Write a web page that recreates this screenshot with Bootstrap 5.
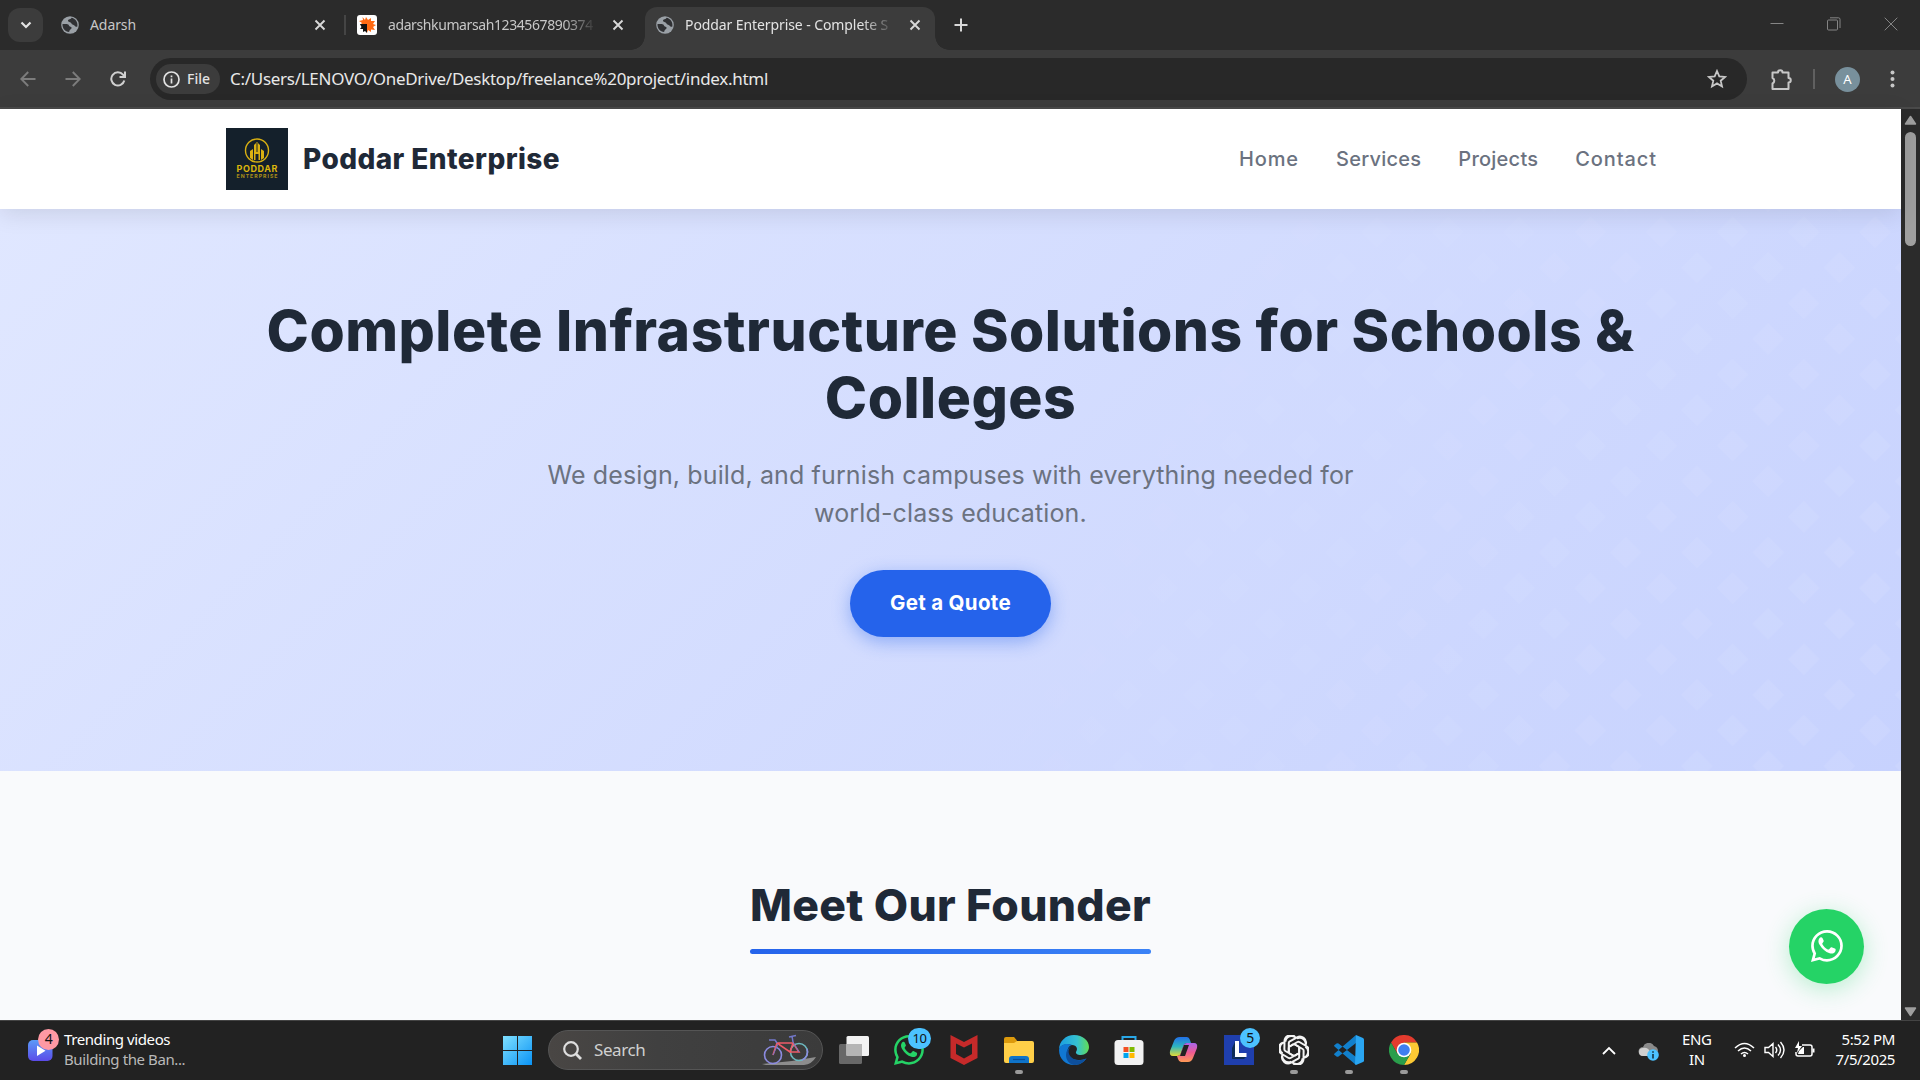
<!DOCTYPE html>
<html lang="en">
<head>
<meta charset="utf-8">
<title>Poddar Enterprise - Complete Solutions</title>
<link href="https://cdn.jsdelivr.net/npm/bootstrap@5.3.0/dist/css/bootstrap.min.css" rel="stylesheet">
<style>
html,body{height:100%;overflow:hidden}
body{font-family:"Noto Sans","Open Sans",sans-serif;background:#222;color:#e3e3e3;font-size:15px;line-height:20px}
svg{display:block;flex:none}
span,a{white-space:nowrap}
/* browser chrome */
.tabstrip{height:50px;background:#2b2b2b;padding-left:8px}
.tabmenu{width:35px;height:34px;border-radius:12px;background:#3c3c3c;margin-top:8px}
.btab{height:43px;margin-top:7px;font-size:14px;color:#c7c7c7}
.btab span{margin-left:11px;letter-spacing:-.09px}
.btab-1{width:301px;padding:0 18px 0 18px}
.btab-2{width:299px;padding:0 21px 0 11px}
.btab-2 span{width:209px;letter-spacing:-.4px}
.btab-sep{width:2px;height:20px;background:#454545}
.btab-on{width:290px;background:#3c3c3c;border-radius:12px 12px 0 0;padding:0 14px 0 11px;color:#e3e3e3}
.btab-on span{width:210px}
.btab-on::before,.btab-on::after{content:"";position:absolute;bottom:0;width:14px;height:14px}
.btab-on::before{left:-14px;background:radial-gradient(circle at 0 0,transparent 13.5px,#3c3c3c 14px)}
.btab-on::after{right:-14px;background:radial-gradient(circle at 100% 0,transparent 13.5px,#3c3c3c 14px)}
.fadeout{-webkit-mask-image:linear-gradient(90deg,#000 84%,transparent);mask-image:linear-gradient(90deg,#000 84%,transparent);overflow:hidden}
.newtab{margin:18px 0 0 19px}
.wincontrols{gap:43px;padding:17px 22px 0 0}
.toolbar{height:59px;background:#3c3c3c;border-bottom:2px solid #4a4a4a;padding:8px 0 0 16px}
.toolgroup{height:42px}
.navkeys{width:134px;gap:29px;padding-left:4px}
.omnibox{width:1597px;height:42px;border-radius:21px;background:#282828;padding:0 20px 0 6px}
.filechip{width:64px;height:30px;border-radius:15px;background:#3c3c3c;padding-left:7px;gap:7px;font-size:14px;font-weight:500}
.urltext{font-size:17px;color:#e8e8e8;margin-left:10px;letter-spacing:-.285px}
.exts{padding-left:24px}
.exts-sep{width:2px;height:20px;background:#606060;margin:0 20px 0 21px}
.avatar{width:25px;height:25px;border-radius:50%;background:#78909c;color:#fff;font-size:13px;margin-right:30px}
/* page */
.viewport{height:911px;background:#2b2b2b}
.sitepage{width:1901px;font-family:Inter,sans-serif;background:#f9fafc}
.sitehead{height:100px;background:#fff;padding:0 244px 0 226px;box-shadow:0 5px 22px rgba(0,0,0,.1);z-index:2}
.brandname{font-size:28px;font-weight:800;color:#1f2937;margin-left:15px;letter-spacing:.42px}
.sitenav{font-size:20px;font-weight:500;gap:37px}
.sitenav .nav-link{color:#6b7280;padding:0;letter-spacing:.25px}
.sitenav .wide{letter-spacing:.9px}
.hero{height:562px;background:linear-gradient(135deg,#e0e7ff,#c7d2fe);padding-top:88px}
.hero h1{font-size:57px;line-height:67px;font-weight:800;color:#1f2937;margin:0;letter-spacing:.48px}
.herosub{font-size:25px;line-height:38px;color:#6b7280;margin-top:25px;letter-spacing:.13px}
.quote{width:201px;height:67px;border-radius:34px;background:#2563eb;color:#fff;font-size:20.5px;font-weight:700;letter-spacing:.3px;margin-top:38px;box-shadow:0 5px 18px rgba(37,99,235,.4);border:0}
.founder{height:249px;padding-top:100px}
.founder h2{font-size:44.5px;line-height:68px;font-weight:800;color:#1f2937;margin:0;letter-spacing:.31px}
.rule{width:401px;height:5px;border-radius:3px;background:linear-gradient(90deg,#2563eb,#3b82f6);margin-top:10px}
.wa{right:37px;bottom:36px;width:75px;height:75px;border-radius:50%;background:#25d366;box-shadow:0 5px 25px rgba(37,211,102,.3);padding-bottom:2px;z-index:3}
.scroller{width:19px;padding:6px 0 3px}
.thumb{width:11px;height:114px;border-radius:6px;background:#9f9f9f;margin-top:7px}
/* taskbar */
.taskbar{height:60px;background:#222;border-top:1px solid #444;color:#fff;letter-spacing:-.4px;padding-bottom:1px}
.widget{width:503px;padding-left:28px}
.widget-icon{width:36px}
.widget-sub{color:#b9b9b9}
.twolines{margin-top:-2px}
.bubble{position:absolute;border-radius:50%;color:#111;text-align:center;background:#4cc2ff;font-size:14px}
.bubble-4{left:10px;top:-11px;width:21px;height:21px;background:#ff99a4}
.bubble-10{left:14px;top:-7px;width:23px;height:21px;border-radius:11px;font-size:13px}
.bubble-5{left:16px;top:-7px;width:20px;height:20px}
.searchbox{width:275px;height:40px;border-radius:20px;background:linear-gradient(90deg,#494644,#404040 40%,#3b3b3b);border:1px solid #555;margin:0 16px;padding:0 6px 0 14px;font-size:17px;color:#d0d0d0;gap:12px}
.apps{gap:25px}
.app{width:30px;height:30px}
.running::after{content:"";position:absolute;left:11px;bottom:-9px;width:8px;height:4px;border-radius:2px;background:#9a9a9a}
.tray{padding-right:25px}
.cloud{margin:3px 22px 0}
.status{gap:9px;padding:0 21px 0 22px}
</style>
</head>
<body class="d-flex flex-column">
<svg width="0" height="0" class="position-absolute"><defs>
<symbol id="globe" viewBox="0 0 18 18"><circle cx="9" cy="9" r="8.8" fill="#9aa0a6"/><path d="M1.500 8c3 .1 6-.3 6.400 1.400.4 1.500 2.600.9 2.700 2.400.1 1.400-2.200 1.600-2.400 4.200C4 15.800 1.300 12.500 1.500 8zM10.500 1.700c-.3 1.700-3.600 1.200-3.500 3.100.1 1.600 2.700.9 3.300 2.500.6 1.700 3 1.500 3.600 2.800.4.700 1.500.7 2.500.3C17 5.500 14 2.200 10.500 1.700z" fill="#303134"/></symbol>
<symbol id="cross" viewBox="0 0 12 12"><path d="M1.500 1.500l9 9m0-9l-9 9" stroke="#d8d8d8" stroke-width="1.900"/></symbol>
<symbol id="wapp" viewBox="0 0 16 16"><path d="M13.601 2.326A7.850 7.850 0 0 0 7.994 0C3.627 0 .068 3.558.064 7.926c0 1.399.366 2.760 1.057 3.965L0 16l4.204-1.102a7.900 7.900 0 0 0 3.790.965h.004c4.368 0 7.926-3.558 7.930-7.930A7.900 7.900 0 0 0 13.600 2.326zM7.994 14.521a6.600 6.600 0 0 1-3.356-.920l-.240-.144-2.494.654.666-2.433-.156-.251a6.560 6.560 0 0 1-1.007-3.505c0-3.626 2.957-6.584 6.591-6.584a6.560 6.560 0 0 1 4.660 1.931 6.560 6.560 0 0 1 1.928 4.660c-.004 3.639-2.961 6.592-6.592 6.592"/><path d="M5.800 4.100c-.3-.6-1.200-.6-1.600 0-.7.900-.6 2.200.1 3.300 1.300 2.100 2.900 3.600 5 4.200 1.300.4 2.500 0 2.900-1 .3-.8.1-1.100-.3-1.300l-1.300-.6c-.4-.2-.7-.1-.9.200l-.6.7c-.2.200-.4.200-.7.100-1.200-.6-2.100-1.500-2.700-2.600-.1-.2-.1-.4.100-.6l.5-.7c.1-.2.100-.3 0-.5z"/></symbol>
</defs></svg>

<div class="tabstrip d-flex align-items-start">
  <div class="tabmenu d-flex align-items-center justify-content-center"><svg width="12" height="8"><path d="M1.500 1.500L6 6l4.500-4.500" fill="none" stroke="#e3e3e3" stroke-width="2.200"/></svg></div>
  <div class="btab btab-1 d-flex align-items-center pb-2"><svg width="18" height="18"><use href="#globe"/></svg><span>Adarsh</span><svg class="ms-auto" width="12" height="12"><use href="#cross"/></svg></div>
  <div class="btab-sep align-self-center"></div>
  <div class="btab btab-2 d-flex align-items-center pb-2"><svg width="20" height="20" viewBox="0 0 20 20"><rect width="20" height="20" rx="3" fill="#fff"/><path d="M9 2l2 3 3-2v3l4 0-2 3 3 1-3 2 2 3-4-.5V17l-3-2-1 3-1.500-8H3l2-2-3-2 4-1-.5-3L8 5z" fill="#ff6a13"/><path d="M3 9h7v9l-2-2-2 1v-3l-3 0 1.500-2z" fill="#111"/></svg><span class="fadeout">adarshkumarsah1234567890374</span><svg class="ms-auto" width="12" height="12"><use href="#cross"/></svg></div>
  <div class="btab btab-on position-relative d-flex align-items-center pb-2"><svg width="18" height="18"><use href="#globe"/></svg><span class="fadeout">Poddar Enterprise - Complete S</span><svg class="ms-auto" width="12" height="12"><use href="#cross"/></svg></div>
  <svg class="newtab" width="14" height="14"><path d="M7 .5v13M.5 7h13" stroke="#d8d8d8" stroke-width="2"/></svg>
  <div class="wincontrols ms-auto d-flex align-items-center">
    <svg width="14" height="14"><path d="M.5 6.500h13" stroke="#858585"/></svg>
    <svg width="14" height="14" fill="none" stroke="#858585"><rect x=".5" y="3" width="10" height="10" rx="1"/><path d="M3 .8h8.500q1.500 0 1.500 1.500V11"/></svg>
    <svg width="14" height="14"><path d="M.7.7l12.600 12.600m0-12.600L.7 13.300" stroke="#858585"/></svg>
  </div>
</div>

<div class="toolbar d-flex align-items-start">
  <div class="toolgroup navkeys d-flex align-items-center">
    <svg width="16" height="16" fill="none" stroke="#7c7c7c" stroke-width="1.900"><path d="M15.500 8H1.500M8.200 1L1.300 8l6.900 7"/></svg>
    <svg width="16" height="16" fill="none" stroke="#7c7c7c" stroke-width="1.900"><path d="M.5 8h14M7.800 1l6.900 7-6.900 7"/></svg>
    <svg width="16" height="16" viewBox="0 0 16 16" fill="none" stroke="#d0d0d0" stroke-width="2"><path d="M14.300 9.500A6.600 6.600 0 1 1 13 3.700L14.800 6M15 .5V6H9.500"/></svg>
  </div>
  <div class="omnibox d-flex align-items-center">
    <div class="filechip d-flex align-items-center"><svg width="17" height="17" fill="none" stroke="#e3e3e3" stroke-width="1.700"><circle cx="8.500" cy="8.500" r="7.500"/><path d="M8.500 7.500v5M8.500 4.500v1.700"/></svg><span>File</span></div>
    <span class="urltext">C:/Users/LENOVO/OneDrive/Desktop/freelance%20project/index.html</span>
    <svg class="ms-auto" width="20" height="20" viewBox="0 0 20 20"><path d="M10 2l2.300 5.400 5.800.5-4.400 3.800 1.300 5.700-5-3-5 3 1.300-5.700L1.900 7.900l5.800-.5z" fill="none" stroke="#c7c7c7" stroke-width="1.800"/></svg>
  </div>
  <div class="toolgroup exts d-flex align-items-center">
    <svg width="21" height="21" viewBox="0 0 21 21"><path d="M1.500 3.500H7a2 2 0 0 1 4.500 0h6v5.500a2 2 0 0 1 0 4.500V20h-16v-5.500a3 3 0 0 0 0-5.500z" fill="none" stroke="#c7c7c7" stroke-width="2" stroke-linejoin="round"/></svg>
    <div class="exts-sep"></div>
    <div class="avatar d-flex align-items-center justify-content-center">A</div>
    <svg width="5" height="18" fill="#c7c7c7"><circle cx="2.500" cy="2.500" r="2"/><circle cx="2.500" cy="9" r="2"/><circle cx="2.500" cy="15.500" r="2"/></svg>
  </div>
</div>

<div class="viewport d-flex">
  <div class="sitepage position-relative">
    <header class="sitehead position-relative d-flex align-items-center">
      <svg width="62" height="62" viewBox="0 0 62 62"><rect width="62" height="62" fill="#14202b"/><circle cx="31" cy="22.500" r="11.500" stroke-width="1.400" fill="none" stroke="#d9b012"/><path d="M24 30v-7l3-2v11zM28 32V17l3-3 3 3v15h-1.500v-6h-3v6zM35 32V21l3 2v7z" fill="#d9b012"/><path d="M31 15v9" stroke="#14202b"/><text x="31" y="43.500" text-anchor="middle" font-family="Inter" font-weight="700" font-size="9" textLength="41" fill="#dcb60c">PODDAR</text><text x="31" y="49.500" text-anchor="middle" font-family="Inter" font-weight="700" font-size="5.200" textLength="41" fill="#a98d18">ENTERPRISE</text></svg>
      <span class="brandname">Poddar Enterprise</span>
      <nav class="sitenav nav ms-auto flex-nowrap"><a class="nav-link wide" href="#">Home</a><a class="nav-link" href="#">Services</a><a class="nav-link" href="#">Projects</a><a class="nav-link wide" href="#">Contact</a></nav>
    </header>
    <section class="hero position-relative d-flex flex-column align-items-center">
      <svg class="position-absolute top-0 start-0" width="1901" height="562"><defs><pattern id="dia" width="71.200" height="71.200" patternUnits="userSpaceOnUse" x="1697" y="-12.500"><path d="M35.600 19.600l16 16-16 16-16-16zM0-16l16 16L0 16l-16-16zM71.200-16l16 16-16 16-16-16zM0 55.200l16 16-16 16-16-16zM71.200 55.200l16 16-16 16-16-16z" fill="#fff"/></pattern><linearGradient id="fd" gradientUnits="userSpaceOnUse" x1="950" y1="50" x2="1800" y2="450"><stop offset="0" stop-color="#fff" stop-opacity="0"/><stop offset="1" stop-color="#fff" stop-opacity=".075"/></linearGradient><mask id="mk"><rect width="1901" height="562" fill="url(#fd)"/></mask></defs><rect width="1901" height="562" fill="url(#dia)" mask="url(#mk)"/></svg>
      <h1 class="position-relative text-center">Complete Infrastructure Solutions for Schools &amp;<br>Colleges</h1>
      <div class="herosub position-relative text-center">We design, build, and furnish campuses with everything needed for<br>world-class education.</div>
      <button class="quote btn position-relative p-0">Get a Quote</button>
    </section>
    <section class="founder d-flex flex-column align-items-center">
      <h2>Meet Our Founder</h2>
      <div class="rule"></div>
    </section>
    <div class="wa position-absolute d-flex align-items-center justify-content-center"><svg width="32" height="32" fill="#fff"><use href="#wapp"/></svg></div>
  </div>
  <div class="scroller d-flex flex-column align-items-center">
    <svg width="13" height="10"><path d="M6.500 1.500L11.500 9h-10z" fill="#9f9f9f" stroke="#9f9f9f" stroke-width="1.500" stroke-linejoin="round"/></svg>
    <div class="thumb"></div>
    <svg class="mt-auto" width="13" height="10"><path d="M6.500 8.500L11.500 1h-10z" fill="#9f9f9f" stroke="#9f9f9f" stroke-width="1.500" stroke-linejoin="round"/></svg>
  </div>
</div>

<div class="taskbar d-flex align-items-center">
  <div class="widget d-flex align-items-center">
    <div class="widget-icon position-relative"><svg width="25" height="21"><defs><linearGradient id="vg" x2="0" y2="1"><stop stop-color="#5b9bf8"/><stop offset="1" stop-color="#5b4be8"/></linearGradient></defs><rect width="24.500" height="21" rx="5" fill="url(#vg)"/><path d="M9 5.500v10.500l8.500-5.200z" fill="#fff"/></svg><div class="bubble bubble-4">4</div></div>
    <div class="twolines d-flex flex-column align-items-start"><span>Trending videos</span><span class="widget-sub">Building the Ban...</span></div>
  </div>
  <svg width="29" height="29"><defs><linearGradient id="wg" x2="1" y2="1"><stop stop-color="#7fe0ff"/><stop offset="1" stop-color="#0a93f5"/></linearGradient></defs><path d="M0 0h14v14H0zM15 0h14v14H15zM0 15h14v14H0zM15 15h14v14H15z" fill="url(#wg)"/></svg>
  <div class="searchbox d-flex align-items-center">
    <svg width="19" height="19" fill="none" stroke="#dedede" stroke-width="2.200"><circle cx="8" cy="8" r="6.800"/><path d="M12.800 12.800l5.200 5.200" stroke-width="2.800"/></svg>
    <span>Search</span>
    <svg class="ms-auto" width="54" height="32" viewBox="0 0 54 32" fill="none"><path d="M0 30l30-3 24-4q-4 7-12 8H4z" fill="#8d8d8d"/><circle cx="11" cy="21" r="8.500" stroke="#8c8be0" stroke-width="1.600"/><circle cx="37" cy="18" r="8.500" stroke="#6db9c0" stroke-width="1.600"/><path d="M45 15a8.500 8.500 0 0 1-5 11" stroke="#8c8be0" stroke-width="1.600"/><path d="M11 21l4-12 13 9 3-9-16 0M28 18l9 0-6-9" stroke="#ef5b68" stroke-width="1.600"/><path d="M11 21l5-11M37 18L31 8" stroke="#7378c9"/><path d="M7 6h6l2 3M27 3l7-1.500M31 8l-1-6" stroke="#7378c9" stroke-width="1.500"/></svg>
  </div>
  <div class="apps d-flex">
    <svg class="app" viewBox="0 0 30 30"><rect x="0" y="9" width="23" height="20" rx="1.500" fill="#686868"/><rect x="7.500" y="1" width="22.500" height="20" rx="1.500" fill="#f2f2f2"/><path d="M7.500 9H23v12H7.500z" fill="#b5b5b5"/></svg>
    <div class="app position-relative"><svg width="30" height="30" fill="#25d366"><use href="#wapp"/></svg><div class="bubble bubble-10">10</div></div>
    <svg class="app" viewBox="0 0 30 30"><path d="M1.500 0L15 7 28.500 0v23L15 30 1.500 23zM7 8.500V19l8 4.500 8-4.500V8.500l-8 4z" fill="#c62a2a" fill-rule="evenodd"/></svg>
    <div class="app position-relative running"><svg width="30" height="30"><path d="M0 4q0-2 2-2h8l3 3.500V9H0z" fill="#dc9a0c"/><path d="M0 8h10l3-2h15q2 0 2 2v18q0 2-2 2H2q-2 0-2-2z" fill="#ffcf48"/><path d="M5 28v-4q0-3 3-3h14q3 0 3 3v4z" fill="#0f74c9"/><path d="M9 24.500h12" stroke="#0a4e98" stroke-width="1.200"/></svg></div>
    <svg class="app" viewBox="0 0 30 30"><defs><linearGradient id="e1"><stop stop-color="#1b9de2"/><stop offset=".6" stop-color="#35c1d0"/><stop offset="1" stop-color="#62dc55"/></linearGradient></defs><path d="M0 15C0 6 7 0 15 0c9 0 15 6 15 12 0 5-4 8-8 8-4 0-5.500-1.500-5-3 2-3 1-7-4-7C7 8 1 10 0 15z" fill="url(#e1)"/><path d="M0 15C1 9 8 8 13 10c-4 1-5 5-4 8 1.500 6 8 9 18.500 5.500C24 28 20 30 15 30 7 30 0 24 0 15z" fill="#1178d3"/><path d="M12.500 11c-4 3-3.500 8-.5 11 4 4 10 4 15.500 1.500C24 28 20 30 15 30c-5-1-8-5-8-10 0-4 2-7 5.500-9z" fill="#0d4f9c"/></svg>
    <svg class="app" viewBox="0 0 30 30"><path d="M8.500 7V2h13v5" fill="none" stroke="#29a8e8" stroke-width="2"/><rect x=".5" y="5" width="29" height="25" rx="3.500" fill="#f2f2f2"/><path d="M9.500 12h5v5h-5z" fill="#f25022"/><path d="M15.500 12h5v5h-5z" fill="#7fba00"/><path d="M9.500 18h5v5h-5z" fill="#00a4ef"/><path d="M15.500 18h5v5h-5z" fill="#ffb900"/></svg>
    <svg class="app" viewBox="0 0 30 30"><defs><linearGradient id="c1" x2="0" y2="1"><stop stop-color="#2270e8"/><stop offset=".5" stop-color="#2db5c0"/><stop offset="1" stop-color="#e3dc37"/></linearGradient><linearGradient id="c2" x2="0" y2="1"><stop stop-color="#a765ed"/><stop offset=".5" stop-color="#ee5a92"/><stop offset="1" stop-color="#ff9a55"/></linearGradient></defs><path d="M11 2h7q2 0 3 3l1 3h-4q-3 0-4 4l-2 6q-1 3-4 3H4q-4 0-3-5L5 6q1.500-4 6-4z" fill="url(#c1)"/><path d="M19 27h-7q-2 0-3-3l-1-3q3 0 4-3l2-6q1-4 4-4h7q4 0 3 5l-4 10q-1.500 4-5 4z" fill="url(#c2)"/><path d="M15 10h5l-4 11h-5z" fill="#222"/></svg>
    <div class="app position-relative"><svg width="30" height="30"><path d="M0 0h30v30H0z" fill="#1f3fae"/><path d="M11 7v14l-3 3V13zM8 24h12l2-2H11z" fill="#0f2c55"/><path d="M11 6h4v12h7.500v4H11z" fill="#fff"/></svg><div class="bubble bubble-5">5</div></div>
    <div class="app position-relative running"><svg width="30" height="30" viewBox="-15 -15 30 30" fill="none" stroke="#f4f4f4" stroke-width="2" stroke-linejoin="round"><defs><path id="kn" d="M-8.600-8.200A6.200 6.200 0 0 1 2.200-11.900M-5.200 3V-7q0-1.100 1-1.700L3-12.700a6.200 6.200 0 0 1 8.900 6.800M-5.200-3l4.800-2.800"/></defs><use href="#kn"/><use href="#kn" transform="rotate(60)"/><use href="#kn" transform="rotate(120)"/><use href="#kn" transform="rotate(180)"/><use href="#kn" transform="rotate(240)"/><use href="#kn" transform="rotate(300)"/></svg></div>
    <div class="app position-relative running"><svg width="30" height="30"><path d="M0 10.500l2.500-2q1-.5 2 0L22 22v8L.5 11.500zM0 19.500l2.500 2q1 .5 2 0L22 8V0L.5 18.500z" fill="#1280cc"/><path d="M22 0l7 3q1 .5 1 1.500v21q0 1-1 1.500l-7 3-1-1z" fill="#2aa6f2"/></svg></div>
    <div class="app position-relative running"><svg width="30" height="30" viewBox="-15 -15 30 30"><path d="M-13-7.500A15 15 0 0 1 13-7.500H0L-6.500 3.700z" fill="#e33b2e"/><path d="M13-7.500A15 15 0 0 1 0 15L6.500 3.700 0-7.500z" fill="#fcc934"/><path d="M0 15A15 15 0 0 1-13-7.500L-6.500 3.700 6.500 3.700z" fill="#2a9e4b"/><circle r="7.300" fill="#fff"/><circle r="5.800" fill="#3f7ff0"/></svg></div>
  </div>
  <div class="tray ms-auto d-flex align-items-center">
    <svg width="14" height="9"><path d="M1 8l6-6 6 6" fill="none" stroke="#fff" stroke-width="1.800"/></svg>
    <svg class="cloud" width="22" height="18"><path d="M5 13a4.500 4.500 0 0 1 0-9 6 6 0 0 1 11-1q4 1 4 5l-4 5z" fill="#8a8a8a"/><path d="M5 13a4 4 0 0 1 0-8q5-1 7 4l-2 4z" fill="#d0d0d0"/><circle cx="15" cy="12" r="5.800" fill="#4cc2ff"/><path d="M15 11v4.500M15 8.200v1.600" stroke="#14303f" stroke-width="1.600"/></svg>
    <div class="twolines d-flex flex-column align-items-center"><span>ENG</span><span>IN</span></div>
    <div class="status d-flex align-items-center">
      <svg width="21" height="16" fill="none" stroke="#fff" stroke-width="1.500"><path d="M1 6q9.500-9 19 0M4 9q6.500-6 13 0M7 12q3.500-3 7 0"/><circle cx="10.500" cy="13.500" r="1.500" fill="#fff" stroke="none"/></svg>
      <svg width="21" height="18" fill="none" stroke="#fff" stroke-width="1.400"><path d="M1 6.500h3.500L9 2.500v13l-4.500-4H1zM11.500 6q2.500 3 0 6M14 3.500q5 5.500 0 11M16.500 1q7 8 0 16"/></svg>
      <svg width="21" height="18" fill="none" stroke="#fff" stroke-width="1.500"><path d="M8 4h8q2 0 2 2v7q0 2-2 2H4q-2 0-2-2v-2"/><path d="M19.500 7.500v4" stroke-width="2"/><path d="M5 0L1 7h3l-1 5 5-7H5z" fill="#fff" stroke="none"/><path d="M4 13l1-3 4-4h1v7z" fill="#fff" stroke="none"/></svg>
    </div>
    <div class="twolines d-flex flex-column align-items-end"><span>5:52 PM</span><span>7/5/2025</span></div>
  </div>
</div>
<script src="https://cdn.jsdelivr.net/npm/bootstrap@5.3.0/dist/js/bootstrap.bundle.min.js"></script>
</body>
</html>
